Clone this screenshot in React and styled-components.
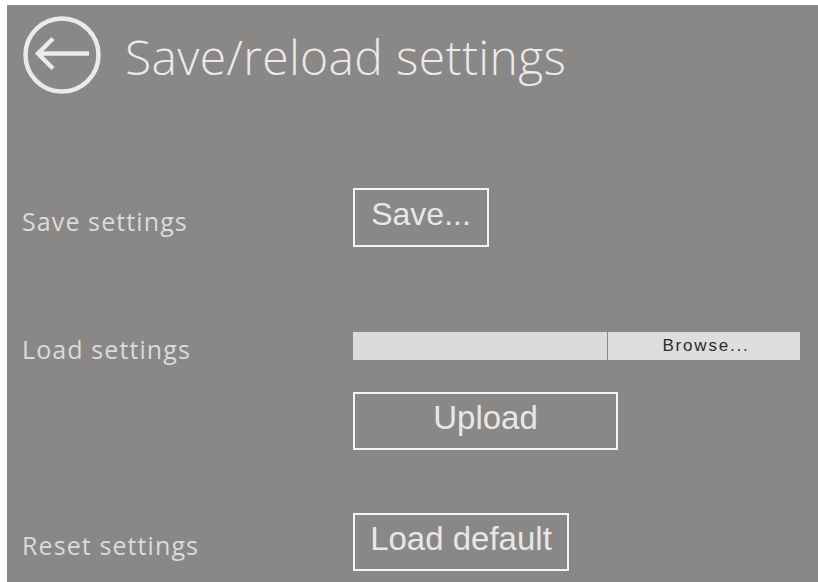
import React from "react";
import styled, { createGlobalStyle } from "styled-components";

const GlobalStyle = createGlobalStyle`
  html, body {
    margin: 0;
    padding: 0;
    background: #ffffff;
  }
  body {
    font-family: "Open Sans", "Noto Sans", sans-serif;
  }
`;

const BackIcon = () => (
  <svg width="80" height="80" viewBox="0 0 80 80" fill="none">
    <circle cx="40" cy="40" r="36.5" stroke="#ebe9e9" strokeWidth="4.5" />
    <path
      d="M16 38.5 H67 M31 23.5 L16 38.5 L31 53.5"
      stroke="#ebe9e9"
      strokeWidth="4.5"
      strokeLinecap="butt"
      strokeLinejoin="miter"
    />
  </svg>
);

const SettingsPage = () => {
  return (
    <Panel>
      <Header>
        <BackButton aria-label="Back">
          <BackIcon />
        </BackButton>
        <Title>Save/reload settings</Title>
      </Header>

      <Row $top={93}>
        <Label>Save settings</Label>
        <OutlineButton $width={136} $height={59} $size={32}>
          Save...
        </OutlineButton>
      </Row>

      <Row $top={85}>
        <Label>Load settings</Label>
        <FileInput>
          <FileField />
          <BrowseButton>Browse...</BrowseButton>
        </FileInput>
      </Row>

      <Row $top={32}>
        <span />
        <OutlineButton $width={265} $height={58} $size={33}>
          Upload
        </OutlineButton>
      </Row>

      <Row $top={63}>
        <Label>Reset settings</Label>
        <OutlineButton $width={216} $height={58} $size={33}>
          Load default
        </OutlineButton>
      </Row>
    </Panel>
  );
};

export default function App() {
  return (
    <>
      <GlobalStyle />
      <SettingsPage />
    </>
  );
}

const Panel = styled.div`
  margin: 5px 0 0 7px;
  min-height: 577px;
  background: #8a8787;
  padding: 10px 0 0 15px;
  box-sizing: border-box;
  display: flex;
  flex-direction: column;
`;

const Header = styled.div`
  display: flex;
  align-items: center;
  gap: 23px;
  height: 80px;
`;

const BackButton = styled.div`
  width: 80px;
  height: 80px;
  display: flex;
  align-items: center;
  justify-content: center;
  cursor: pointer;
`;

const Title = styled.h1`
  margin: 2px 0 0 0;
  font-family: "Open Sans", sans-serif;
  font-weight: 300;
  font-size: 48px;
  letter-spacing: 0.35px;
  color: #ebe9e9;
  white-space: nowrap;
`;

const Row = styled.div`
  display: grid;
  grid-template-columns: 331px auto;
  align-items: center;
  margin-top: ${(p) => p.$top}px;
`;

const Label = styled.div`
  font-family: "Open Sans", sans-serif;
  font-size: 25px;
  letter-spacing: 1.1px;
  line-height: 22px;
  height: 22px;
  padding-top: 6px;
  color: #dcdada;
  white-space: nowrap;
`;

const OutlineButton = styled.div`
  width: ${(p) => p.$width}px;
  height: ${(p) => p.$height}px;
  box-sizing: border-box;
  border: 2px solid #f4f4f4;
  display: flex;
  align-items: center;
  justify-content: center;
  font-family: "Liberation Sans", Arial, sans-serif;
  font-size: ${(p) => p.$size}px;
  color: #e8e7e7;
  padding-bottom: 6px;
  cursor: pointer;
`;

const FileInput = styled.div`
  display: flex;
  width: 447px;
  height: 28px;
  gap: 1px;
`;

const FileField = styled.div`
  width: 254px;
  background: #dbdbdb;
`;

const BrowseButton = styled.div`
  flex: 1;
  background: #dddddd;
  display: flex;
  align-items: center;
  justify-content: center;
  font-family: "Liberation Sans", Arial, sans-serif;
  font-size: 17px;
  letter-spacing: 1.8px;
  color: #2b2b2b;
  padding-left: 4px;
`;
